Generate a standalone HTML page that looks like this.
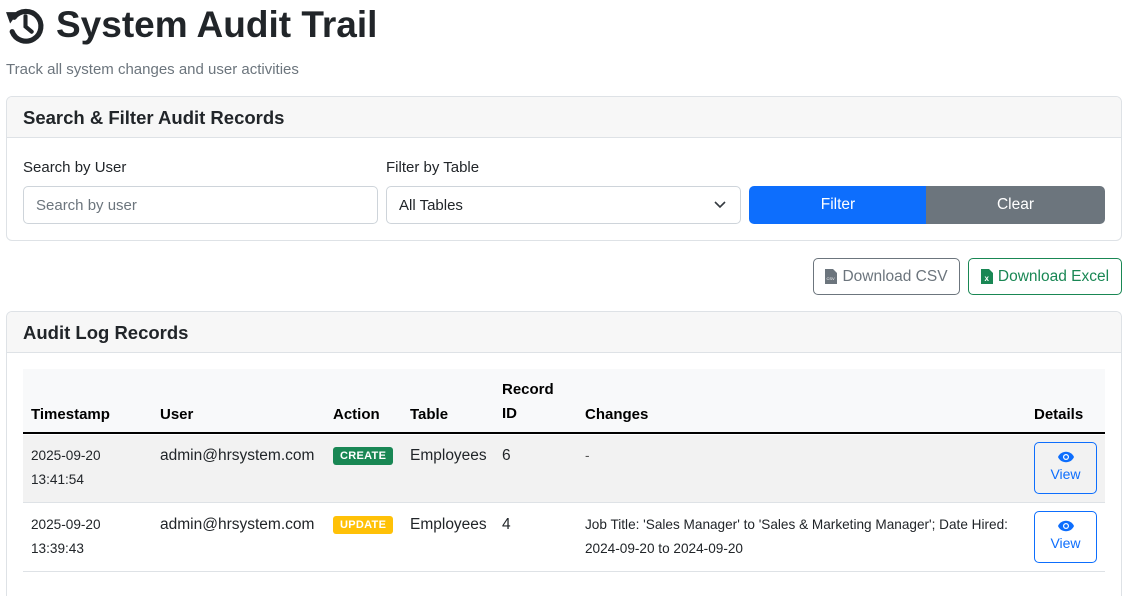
<!DOCTYPE html>
<html><head><style>
*{box-sizing:border-box;margin:0;padding:0}
html,body{width:1127px;height:596px;overflow:hidden}
body{background:#fff;font-family:"Liberation Sans",sans-serif;color:#212529;position:relative}
.a{position:absolute;white-space:nowrap}
.card{position:absolute;border:1px solid #dee2e6;border-radius:6px;background:#fff;overflow:hidden}
.ch{position:absolute;left:0;right:0;top:0;height:41px;background:#f7f7f7;border-bottom:1px solid #dee2e6;font-size:18.5px;font-weight:bold;padding:10px 16px;color:#212529}
.inp{position:absolute;height:38px;border:1px solid #ced4da;border-radius:5px;font-size:15px;padding:10px 12px;color:#6c757d}
.btn{position:absolute;display:flex;align-items:center;justify-content:center;font-size:15.5px}
.th{font-weight:bold;font-size:15px;color:#000}
.td{font-size:15.5px}
.sm{font-size:13.6px;line-height:24px}
.badge{position:absolute;font-size:11px;font-weight:bold;color:#fff;border-radius:3px;padding:3px 7px;letter-spacing:.3px}
.view{position:absolute;width:63px;height:52px;border:1px solid #0d6efd;border-radius:5px;color:#0d6efd;font-size:14px;text-align:center;padding-top:8px;line-height:22px}
.view svg{display:block;margin:0 auto}
</style></head><body>
<svg class="a" style="left:5px;top:5px" width="41" height="41" viewBox="0 0 40 40"><path d="M9 12 A14.5 14.5 0 1 1 7 26" fill="none" stroke="#212529" stroke-width="5" stroke-linecap="round"/><path d="M1 7 L13 7 L5 18 Z" fill="#212529"/><path d="M20 11 V21 L26 26" fill="none" stroke="#212529" stroke-width="4" stroke-linecap="round"/></svg>
<div class="a" style="left:56px;top:4px;font-size:37px;font-weight:bold;color:#212529">System Audit Trail</div>
<div class="a" style="left:6px;top:61px;font-size:15px;color:#6c757d">Track all system changes and user activities</div>

<div class="card" style="left:6px;top:96px;width:1116px;height:145px">
<div class="ch">Search &amp; Filter Audit Records</div>
<div class="a" style="left:16px;top:62px;font-size:15px">Search by User</div>
<div class="a" style="left:379px;top:62px;font-size:15px">Filter by Table</div>
<div class="inp" style="left:16px;top:89px;width:355px">Search by user</div>
<div class="inp" style="left:379px;top:89px;width:355px;color:#212529">All Tables<svg style="position:absolute;right:14px;top:13px" width="12" height="9" viewBox="0 0 12 9"><path d="M1 2 L6 7 L11 2" fill="none" stroke="#343a40" stroke-width="1.6"/></svg></div>
<div class="btn" style="left:742px;top:89px;width:178px;height:38px;background:#0d6efd;color:#fff;border-radius:5px 0 0 5px">Filter</div>
<div class="btn" style="left:919px;top:89px;width:179px;height:38px;background:#6c757d;color:#fff;border-radius:0 5px 5px 0">Clear</div>
</div>

<div class="btn" style="left:813px;top:258px;width:147px;height:37px;border:1px solid #6c757d;border-radius:5px;color:#6c757d"><svg width="12" height="15" viewBox="0 0 12 15" style="margin-right:5px"><path d="M0 0H8L12 4V15H0Z" fill="#6c757d"/><text x="1.5" y="11" font-size="4" fill="#fff" font-family="Liberation Sans">CSV</text></svg>Download CSV</div>
<div class="btn" style="left:968px;top:258px;width:154px;height:37px;border:1px solid #198754;border-radius:5px;color:#198754"><svg width="12" height="15" viewBox="0 0 12 15" style="margin-right:5px"><path d="M0 0H8L12 4V15H0Z" fill="#198754"/><text x="3.5" y="12" font-size="8" font-weight="bold" fill="#fff" font-family="Liberation Sans">x</text></svg>Download Excel</div>

<div class="card" style="left:6px;top:311px;width:1116px;height:285px;border-bottom:none;border-radius:6px 6px 0 0">
<div class="ch">Audit Log Records</div>
<div class="a" style="left:16px;top:57px;width:1082px;height:65px;background:#f8f9fa;border-bottom:2px solid #000"></div>
<div class="a" style="left:16px;top:123px;width:1082px;height:68px;background:#f2f2f2;border-bottom:1px solid #dee2e6"></div>
<div class="a" style="left:16px;top:191px;width:1082px;height:69px;border-bottom:1px solid #dee2e6"></div>
<div class="a th" style="left:24px;top:94px">Timestamp</div>
<div class="a th" style="left:153px;top:94px">User</div>
<div class="a th" style="left:326px;top:94px">Action</div>
<div class="a th" style="left:403px;top:94px">Table</div>
<div class="a th" style="left:495px;top:66px;line-height:24px">Record<br>ID</div>
<div class="a th" style="left:578px;top:94px">Changes</div>
<div class="a th" style="left:1027px;top:94px">Details</div>

<div class="a sm" style="left:24px;top:132px">2025-09-20<br>13:41:54</div>
<div class="a td" style="left:153px;top:135px">admin@hrsystem.com</div>
<div class="badge" style="left:326px;top:135px;background:#198754">CREATE</div>
<div class="a td" style="left:403px;top:135px">Employees</div>
<div class="a td" style="left:495px;top:135px">6</div>
<div class="a sm" style="left:578px;top:132px;color:#555">-</div>
<div class="view" style="left:1027px;top:130px"><svg width="16" height="12" viewBox="0 0 16 12"><path d="M0 6C3-1 13-1 16 6C13 13 3 13 0 6Z" fill="#0d6efd"/><circle cx="8" cy="6" r="3" fill="#fff"/><circle cx="8" cy="6" r="1.8" fill="#0d6efd"/></svg>View</div>

<div class="a sm" style="left:24px;top:201px">2025-09-20<br>13:39:43</div>
<div class="a td" style="left:153px;top:204px">admin@hrsystem.com</div>
<div class="badge" style="left:326px;top:204px;background:#ffc107">UPDATE</div>
<div class="a td" style="left:403px;top:204px">Employees</div>
<div class="a td" style="left:495px;top:204px">4</div>
<div class="a sm" style="left:578px;top:201px;font-size:13.6px">Job Title: 'Sales Manager' to 'Sales &amp; Marketing Manager'; Date Hired:<br>2024-09-20 to 2024-09-20</div>
<div class="view" style="left:1027px;top:199px"><svg width="16" height="12" viewBox="0 0 16 12"><path d="M0 6C3-1 13-1 16 6C13 13 3 13 0 6Z" fill="#0d6efd"/><circle cx="8" cy="6" r="3" fill="#fff"/><circle cx="8" cy="6" r="1.8" fill="#0d6efd"/></svg>View</div>
</div>
</body></html>
